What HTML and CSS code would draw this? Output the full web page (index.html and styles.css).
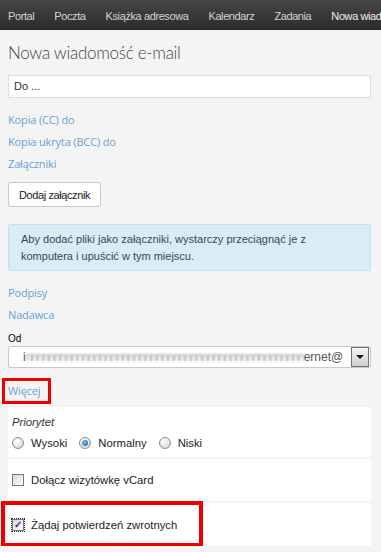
FILE: index.html
```html
<!DOCTYPE html>
<html lang="pl">
<head>
    <meta charset="UTF-8">
    <meta name="viewport" content="width=device-width, initial-scale=1.0">
    <title>Nowa wiadomość e-mail</title>
    <link rel="stylesheet" href="styles.css">
</head>
<body>
    <nav class="topbar">
        <a href="#">Portal</a>
        <a href="#">Poczta</a>
        <a href="#">Książka adresowa</a>
        <a href="#">Kalendarz</a>
        <a href="#">Zadania</a>
        <a href="#" class="current">Nowa wiadomość</a>
    </nav>

    <main class="page">
        <h1>Nowa wiadomość e-mail</h1>

        <div class="to-field">Do ...</div>

        <a href="#" class="link first">Kopia (CC) do</a>
        <a href="#" class="link">Kopia ukryta (BCC) do</a>
        <a href="#" class="link">Załączniki</a>

        <button type="button" class="btn">Dodaj załącznik</button>

        <div class="info">
            Aby dodać pliki jako załączniki, wystarczy przeciągnąć je z komputera i upuścić w tym miejscu.
        </div>

        <a href="#" class="link">Podpisy</a>
        <a href="#" class="link">Nadawca</a>

        <label class="from-label">Od</label>
        <div class="select">
            <span class="select-value">i<span class="blur">nnnnnnnnnnnnnnnnnnnnnnnnnnnnnnnnnnnnnnnnnnnnnnnnn</span>ernet@</span>
            <span class="select-arrow"></span>
        </div>

        <div class="more-row">
            <a href="#" class="link more">Więcej</a>
        </div>

        <div class="options">
            <div class="opt-section">
                <div class="opt-title">Priorytet</div>
                <div class="radios">
                    <label class="radio"><span class="radio-dot"></span>Wysoki</label>
                    <label class="radio"><span class="radio-dot checked"></span>Normalny</label>
                    <label class="radio"><span class="radio-dot"></span>Niski</label>
                </div>
            </div>
            <div class="opt-section">
                <label class="check"><span class="box"></span>Dołącz wizytówkę vCard</label>
            </div>
            <div class="opt-section">
                <label class="check"><span class="box focus">&#10003;</span>Żądaj potwierdzeń zwrotnych</label>
                <span class="mark"></span>
            </div>
        </div>
    </main>
</body>
</html>
```

FILE: styles.css
```css
body {
    margin: 0;
    background-color: #f4f4f4;
    font-family: "Liberation Sans", Arial, sans-serif;
    font-size: 12px;
    color: #222;
    overflow: hidden;
}
.topbar {
    display: flex;
    gap: 20px;
    height: 30px;
    align-items: center;
    padding-left: 8px;
    background: linear-gradient(#464646, #2b2b2b);
    white-space: nowrap;
    overflow: hidden;
}
.topbar a {
    color: #d4d4d4;
    text-decoration: none;
    font-size: 11px;
    letter-spacing: -0.4px;
    padding-top: 1px;
}
.topbar a.current {
    color: #f0f0f0;
}
.page {
    padding: 0 10px 0 8px;
}
h1 {
    margin: 11px 0 10px 0;
    font-family: Lato, "Open Sans", sans-serif;
    font-weight: 300;
    font-size: 17px;
    letter-spacing: -0.3px;
    color: #454545;
    line-height: 24px;
}
.to-field {
    height: 21px;
    line-height: 21px;
    background: white;
    border: 1px solid #dcdcdc;
    padding-left: 5px;
    color: #333;
    font-size: 11px;
}
.link {
    display: block;
    font-family: "Open Sans", sans-serif;
    font-size: 11px;
    letter-spacing: -0.15px;
    color: #6a9fd8;
    text-decoration: none;
    line-height: 22px;
    width: max-content;
}
.link.first {
    margin-top: 11px;
}
.btn {
    display: block;
    margin-top: 7px;
    height: 25px;
    padding: 0 10px;
    background: white;
    border: 1px solid #c8c8c8;
    border-radius: 3px;
    font-family: "Liberation Sans", Arial, sans-serif;
    font-size: 11px;
    letter-spacing: -0.4px;
    color: #222;
}
.info {
    margin-top: 17px;
    margin-bottom: 11px;
    background-color: #d9edf7;
    border: 1px solid #bfe3ef;
    border-radius: 2px;
    padding: 6px 30px 5px 12px;
    line-height: 17px;
    color: #354955;
    font-size: 11px;
}
.from-label {
    display: block;
    margin-top: 7px;
    font-size: 10px;
    color: #000;
    line-height: 12px;
}
.select {
    display: flex;
    height: 20px;
    margin-top: 1px;
    background: white;
    border: 1px solid #c9c9c9;
    border-radius: 2px;
    align-items: center;
}
.select-value {
    flex: 1;
    padding-left: 14px;
    font-size: 12px;
    color: #555;
    white-space: nowrap;
    overflow: hidden;
}
.blur {
    display: inline-block;
    width: 278px;
    overflow: hidden;
    vertical-align: middle;
    color: #a0a0a0;
    letter-spacing: -1px;
    filter: blur(1.2px);
}
.select-arrow {
    width: 16px;
    height: 18px;
    margin-right: 1px;
    border: 1px solid #707070;
    background: linear-gradient(#f4f4f4, #d0d0d0);
    position: relative;
}
.select-arrow::after {
    content: "";
    position: absolute;
    left: 4px;
    top: 7px;
    border-left: 4px solid transparent;
    border-right: 4px solid transparent;
    border-top: 4px solid #111;
}
.more-row {
    margin: 10px 0 3px -6px;
    height: 26px;
}
.more {
    display: inline-block;
    border: 3px solid #ee0000;
    padding: 0 8px 0 3px;
    line-height: 20px;
}
.options {
    display: flex;
    flex-direction: column;
    gap: 2px;
}
.opt-section {
    background: white;
    padding: 0 4px;
    height: 42px;
    display: flex;
    align-items: center;
    position: relative;
}
.opt-section:first-child {
    height: 50px;
    display: block;
}
.opt-section:last-child {
    height: 43px;
}
.opt-title {
    padding-top: 8px;
    font-style: italic;
    font-size: 11.3px;
    color: #333;
    line-height: 14px;
}
.radios {
    display: flex;
    gap: 12px;
    margin-top: 7px;
}
.radio, .check {
    display: flex;
    align-items: center;
    gap: 7px;
    font-size: 11.3px;
    color: #222;
    line-height: 14px;
}
.radio-dot {
    width: 10px;
    height: 10px;
    border-radius: 50%;
    border: 1px solid #8a8a8a;
    background: radial-gradient(circle at 35% 35%, #ffffff, #cfcfcf);
    position: relative;
}
.radio-dot.checked::after {
    content: "";
    position: absolute;
    left: 2px;
    top: 2px;
    width: 6px;
    height: 6px;
    border-radius: 50%;
    background: radial-gradient(circle at 40% 40%, #7ac0f0, #1a5a90);
}
.box {
    width: 10px;
    height: 10px;
    border: 1px solid #7a7a7a;
    background: linear-gradient(135deg, #d8d8d8, #fafafa);
    font-size: 10px;
    line-height: 10px;
    text-align: center;
    color: #2a3a9a;
    font-weight: bold;
    overflow: hidden;
}
.box.focus {
    outline: 1px dotted #222;
}
.mark {
    position: absolute;
    left: -7px;
    top: -2px;
    width: 194px;
    height: 38px;
    border: 4px solid #ee0000;
}
```
